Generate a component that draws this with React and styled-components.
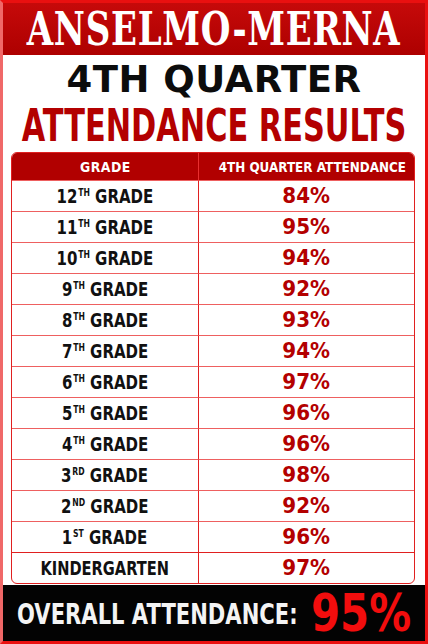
import React from 'react'
import styled, { createGlobalStyle } from 'styled-components'

const rows = [
  { n: '12', sup: 'TH', pct: '84%' },
  { n: '11', sup: 'TH', pct: '95%' },
  { n: '10', sup: 'TH', pct: '94%' },
  { n: '9', sup: 'TH', pct: '92%' },
  { n: '8', sup: 'TH', pct: '93%' },
  { n: '7', sup: 'TH', pct: '94%' },
  { n: '6', sup: 'TH', pct: '97%' },
  { n: '5', sup: 'TH', pct: '96%' },
  { n: '4', sup: 'TH', pct: '96%' },
  { n: '3', sup: 'RD', pct: '98%' },
  { n: '2', sup: 'ND', pct: '92%' },
  { n: '1', sup: 'ST', pct: '96%' },
  { label: 'KINDERGARTEN', pct: '97%' },
]

const App = () => {
  return (
    <>
      <Global />
      <Frame>
        <Banner>
          <Squeeze sx={0.74}>
            <SchoolName>ANSELMO-MERNA</SchoolName>
          </Squeeze>
        </Banner>
        <Headline>
          <Quarter>4TH QUARTER</Quarter>
          <Results>
            <Squeeze sx={0.675}>ATTENDANCE RESULTS</Squeeze>
          </Results>
        </Headline>
        <Table>
          <HeadRow>
            <HeadCell>
              <Squeeze sx={0.86} spacing="0.5px">GRADE</Squeeze>
            </HeadCell>
            <HeadCell>
              <Squeeze sx={0.826}>4TH QUARTER ATTENDANCE</Squeeze>
            </HeadCell>
          </HeadRow>
          {rows.map((r, i) => (
            <Row key={i} last={i === rows.length - 1}>
              <GradeCell>
                {r.label ? (
                  <Squeeze sx={0.75}>{r.label}</Squeeze>
                ) : (
                  <Squeeze sx={0.77}>
                    {r.n}<Sup>{r.sup}</Sup> GRADE
                  </Squeeze>
                )}
              </GradeCell>
              <PctCell>
                <Squeeze sx={0.95}>{r.pct}</Squeeze>
              </PctCell>
            </Row>
          ))}
        </Table>
        <Footer>
          <OverallLabel>
            <Squeeze sx={0.753} origin="left">OVERALL ATTENDANCE:</Squeeze>
          </OverallLabel>
          <OverallValue>
            <Squeeze sx={0.82} origin="right">95%</Squeeze>
          </OverallValue>
        </Footer>
      </Frame>
    </>
  )
}

export default App

const Global = createGlobalStyle`
  html, body {
    margin: 0;
    padding: 0;
    background: #fff;
  }
`

const condensed = `
  font-family: "DejaVu Sans", "Liberation Sans", sans-serif;
  font-weight: 700;
  white-space: nowrap;
`

// horizontal squeeze to mimic the poster's condensed typeface
const Squeeze = styled.span`
  display: inline-block;
  white-space: nowrap;
  transform: scaleX(${p => p.sx});
  transform-origin: ${p => p.origin || 'center'} center;
  letter-spacing: ${p => p.spacing || 'normal'};
`

const Frame = styled.div`
  width: 428px;
  height: 644px;
  box-sizing: border-box;
  border: 3px solid #ea1010;
  border-left-color: #f06868;
  display: flex;
  flex-direction: column;
  background: #fff;
  overflow: hidden;
`

const Banner = styled.div`
  height: 52px;
  flex-shrink: 0;
  background: linear-gradient(180deg, #c60a0a 0%, #ad0000 100%);
  display: flex;
  align-items: center;
  justify-content: center;
`

const SchoolName = styled.span`
  font-family: "DejaVu Serif", "Liberation Serif", serif;
  font-weight: 700;
  font-size: 46px;
  line-height: 1;
  color: #fff;
  letter-spacing: 1px;
`

const Headline = styled.div`
  display: flex;
  flex-direction: column;
  align-items: center;
  padding-top: 5px;
`

const Quarter = styled.div`
  ${condensed}
  font-size: 37px;
  line-height: 40px;
  color: #0c0c0c;
  letter-spacing: 0.5px;
`

const Results = styled.div`
  ${condensed}
  font-size: 45px;
  line-height: 52px;
  color: #b30000;
`

const Table = styled.div`
  margin: 0 10px 0 8px;
  border: 1px solid #e02020;
  border-radius: 6px;
  overflow: hidden;
  display: grid;
  grid-template-columns: 186px 1fr;
`

const HeadRow = styled.div`
  display: contents;
`

const HeadCell = styled.div`
  ${condensed}
  background: #b10000;
  color: #fff;
  font-size: 14.5px;
  height: 27px;
  display: flex;
  align-items: center;
  justify-content: center;
  & + & {
    border-left: 1px solid #e83030;
  }
`

const Row = styled.div`
  display: contents;
  & > div {
    height: 30px;
    border-top: 1px solid ${p => (p.last ? '#e02020' : '#ee6060')};
  }
`

const GradeCell = styled.div`
  ${condensed}
  color: #111;
  font-size: 19.5px;
  display: flex;
  align-items: center;
  justify-content: center;
`

const Sup = styled.span`
  font-size: 10px;
  vertical-align: 7px;
  margin-left: 1px;
`

const PctCell = styled.div`
  ${condensed}
  color: #b30000;
  font-size: 21px;
  display: flex;
  align-items: center;
  justify-content: center;
  padding-right: 12px;
  border-left: 1px solid #e02020;
`

const Footer = styled.div`
  margin-top: auto;
  height: 56px;
  flex-shrink: 0;
  background: #030303;
  display: flex;
  align-items: center;
  padding: 0 14px;
`

const OverallLabel = styled.div`
  ${condensed}
  flex: 1;
  min-width: 0;
  color: #f4f4f4;
  font-size: 28px;
  margin-top: 3px;
`

const OverallValue = styled.div`
  ${condensed}
  flex-shrink: 0;
  color: #f20d0d;
  font-size: 51px;
  line-height: 1;
`
